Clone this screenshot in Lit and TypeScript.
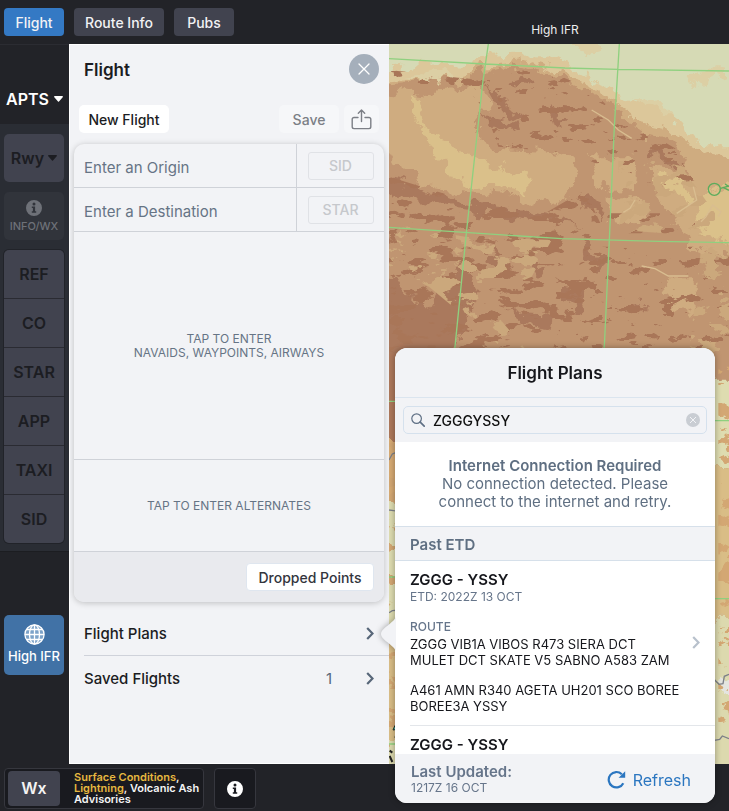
import { LitElement, html, svg, css } from "lit";
import { customElement, state } from "lit/decorators.js";

const reset = css`
  *, *::before, *::after { box-sizing: border-box; }
  button, input { font: inherit; color: inherit; border: 0; background: none; padding: 0; margin: 0; border-radius: 0; }
  button { cursor: pointer; }
  svg { display: block; flex: none; }
  h1, h2, h3, p, ul { margin: 0; padding: 0; font-size: inherit; font-weight: inherit; }
  ul { list-style: none; }
`;

const infoIcon = svg`<svg width="16" height="16" viewBox="0 0 16 16" aria-hidden="true">
  <path fill="currentColor" fill-rule="evenodd" d="M8 0a8 8 0 1 0 0 16A8 8 0 0 0 8 0zM8 2.6a1.5 1.5 0 1 1 0 3 1.5 1.5 0 0 1 0-3zM5.8 6.6h3.3v4.6h1.1v1.5H5.8v-1.5h1.1V8.1H5.8z"/></svg>`;

const caret = svg`<svg width="9" height="6" viewBox="0 0 9 6" aria-hidden="true"><path fill="currentColor" d="M.8 0h7.4c.7 0 1 .7.5 1.200L5 5.400a.7.7 0 0 1-1 0L.3 1.200C-.2.7.1 0 .8 0z"/></svg>`;

const chevron = svg`<svg width="8" height="13" viewBox="0 0 8 13" aria-hidden="true"><path d="M1.200 1l5.300 5.500-5.300 5.500" fill="none" stroke="currentColor" stroke-width="2.200"/></svg>`;

@customElement("terrain-map")
class TerrainMap extends LitElement {
  static styles = css`
    :host { display: block; }
    svg { display: block; width: 100%; height: 100%; }
    .grid { fill: none; stroke: #8fd07f; stroke-width: 4; }
    .border { fill: none; stroke: #7d8088; stroke-width: 4; }
    .fix { fill: none; stroke: #5bac5c; stroke-width: 4; }
  `;

  render() {
    return html`<svg viewBox="12 132 1020 2160" preserveAspectRatio="xMinYMin slice" role="img" aria-label="Terrain map">
      <defs>
        <filter id="rough" color-interpolation-filters="sRGB" filterUnits="userSpaceOnUse" x="-40" y="80" width="1140" height="2260">
          <feTurbulence type="fractalNoise" baseFrequency="0.02" numOctaves="5" seed="7" result="n"/>
          <feDisplacementMap in="SourceGraphic" in2="n" scale="70" xChannelSelector="R" yChannelSelector="G"/>
        </filter>
        <filter id="ridges" filterUnits="userSpaceOnUse" x="-40" y="80" width="1140" height="1400">
          <feTurbulence type="fractalNoise" baseFrequency="0.013 0.03" numOctaves="5" seed="12" result="n"/>
          <feColorMatrix in="n" type="matrix" values="0 0 0 0 0  0 0 0 0 0  0 0 0 0 0  34 0 0 0 -19.500" result="m"/>
          <feComposite in="SourceGraphic" in2="m" operator="in"/>
        </filter>
        <filter id="specks" filterUnits="userSpaceOnUse" x="-40" y="80" width="1140" height="1400">
          <feTurbulence type="fractalNoise" baseFrequency="0.017 0.035" numOctaves="5" seed="5" result="n"/>
          <feColorMatrix in="n" type="matrix" values="0 0 0 0 0  0 0 0 0 0  0 0 0 0 0  34 0 0 0 -21.500" result="m"/>
          <feComposite in="SourceGraphic" in2="m" operator="in"/>
        </filter>
        <filter id="patches" filterUnits="userSpaceOnUse" x="-40" y="80" width="1140" height="2260">
          <feTurbulence type="fractalNoise" baseFrequency="0.015 0.024" numOctaves="5" seed="31" result="n"/>
          <feColorMatrix in="n" type="matrix" values="0 0 0 0 0  0 0 0 0 0  0 0 0 0 0  34 0 0 0 -19" result="m"/>
          <feComposite in="SourceGraphic" in2="m" operator="in"/>
        </filter>
      </defs>
      <rect x="0" y="120" width="1060" height="2200" fill="#c09571"/>
      <g filter="url(#rough)">
        <path fill="#cfac80" d="M-40 80H1100V760L960 735 880 690 940 600 920 540 890 500 900 460 840 420 760 400 700 330 600 265 500 215 400 200 300 215 220 245 120 240-40 250z"/>
        <path fill="#dcc79a" d="M-40 80H1100V480L980 475 900 430 850 385 760 365 690 305 620 260 540 215 430 185 310 200 200 230-40 240z"/>
        <path fill="#d6dab5" d="M-40 80H1100V430L960 430 900 395 860 340 720 300 660 265 590 215 480 165 310 170 250 195 120 190-40 210z"/>
        <path fill="#dccfa4" d="M560 120h80l10 40-60 5zM910 240l60-30 50-20v30l-60 20-30 25zM60 225l90-15 60 25-80 10zM740 290l60 10 60 40-50 0z"/>
        <path fill="#cfac80" d="M-40 265L120 290 160 265 250 260 320 300 285 350 290 410 340 450 470 455 560 480 580 530 540 600 480 615 380 580 280 572 180 565 100 550 50 500-40 460z"/>
        <path fill="#dac08a" d="M110 390L200 420 240 465 340 495 430 535 430 575 340 560 240 555 180 520 140 450zM70 290l40 20 20 90-40-40z"/>
        <path fill="#cfac80" d="M600 475h140l20 35-10 60-70 5-50-40zM680 600l80-10 30 30-50 50-60-10zM840 835l90 0 15 60-30 40-60-20zM790 500l100 20 130 100v160l-100-40-30-80-60-60z"/>
        <path fill="#dbc18a" d="M800 530l90 15 40 50 130-60v190l-110-20-30-100-100-40z"/>
        <path fill="#aa795d" d="M-20 530L80 555 250 610 380 625 500 650 600 680 480 670 330 645 200 625-20 575zM-40 820L60 860 120 930 190 840 230 790 290 880 240 960 200 1080-40 1080zM320 740l60 60-20 30-50-50zM540 860l60 10-20 60-40-30zM390 230l60 20-20 15-60-10zM300 255l50 40 70 60-10 10-70-40zM290 345l110 20 5 25-90-20zM500 325l40 40-20 0-30-20zM360 935l150 10-10 40-90-15zM585 720l80 70-20 20-50-40zM580 580l50 20 30 60-50-40zM800 440l100 60-10 12-100-50zM430 790l60 20-30 15zM750 900l30 5-15 15z"/>
        <path fill="#ad785b" d="M-40 1050H100V1330H-40z"/>
        <path fill="#d7aa73" d="M-40 1330H100V1490H-40z"/>
        <path fill="#dedcb0" d="M-40 1490H100V1870H-40zM960 1130H1100V1390H960z"/>
        <path fill="#d9bd86" d="M-40 1870H100V2220H-40zM960 1390H1100V1850H960z"/>
        <path fill="#dcd9ae" d="M-40 2220H100V2360H-40zM960 1850H1100V2360H960z"/>
        <path fill="#e4e5e0" d="M1000 2040l100 40v30l-80-20z"/>
      </g>
      <g filter="url(#ridges)">
        <path fill="#a97659" d="M12 530L240 600 480 640 600 570 660 700 640 830 500 1000 300 1060H12z"/>
      </g>
      <g filter="url(#specks)">
        <path fill="#a97659" d="M12 210L280 240 460 200 600 260 720 360 880 450 940 540 800 560 560 460 340 440 300 330 250 270 12 260zM640 640l290 0v60l-290 0zM600 740H1032V1060H500z"/>
      </g>
      <g filter="url(#patches)">
        <path fill="#cba87c" d="M12 670L240 710 500 720 440 830 280 900 12 780zM740 460l150 40 100 140v70L700 690zM950 730h82v330h-120zM700 460l200 40v60l-200-40zM12 700l200 100 220 260h-60l-240-200-120-60z"/>
        <path fill="#d3a773" d="M12 1330h40v950h-40zM1000 1100h40v1080h-40z"/>
      </g>
      <g fill="none" stroke="#d9bd90" stroke-width="4">
        <path d="M620 330l50 30 30 30 40 25M770 798l40 8 40 22 60 0M1000 650l8-15-25-20-20 35-15 15M925 560l10 40-60 40M750 600l-15 25-20 12"/>
      </g>
      <g class="grid">
        <path d="M310 132L293 250 245 690 208 1060M703 132L688 380 673 720 657 1060M12 176L300 192 540 204 700 208 1032 213M12 682L250 698 530 716 820 724 1032 728"/>
        <path d="M12 1204H60M12 1731H60M12 2232H60M980 1262H1032M980 1796H1032"/>
      </g>
      <g class="border">
        <path d="M12 1380l10-18 10-4 14-22M12 1530l14 2 24 2M12 1838l10-6 24-2M984 2035l18 18 12-2 4-22 14-6M984 2222l20-4 8-10 20 8"/>
      </g>
      <path d="M30 2176l24-22-8 24 12 2-28 32 6-24-12 2z" fill="#4fc4a5" stroke="#22302e" stroke-width="3"/>
      <path d="M14 2252l8 6M14 2268l8 18" stroke="#222" stroke-width="6"/>
      <g class="fix">
        <circle cx="988" cy="568" r="18"/>
        <path d="M1007 565l25-7M1014 562l18 9M1020 552l12 8"/>
      </g>
    </svg>`;
  }
}

@customElement("side-rail")
class SideRail extends LitElement {
  static styles = [reset, css`
    :host { display: flex; flex-direction: column; background: #222328; font-weight: 600; }
    .top { height: 80px; padding-top: 29px; border-top: 1px solid #2b2c32; display: flex; justify-content: center; }
    .apts { display: flex; align-items: center; gap: 5px; height: 50px; color: #fff; font-size: 16px; }
    .mid { background: #2a2d34; padding: 10px 5px 8px 4px; display: grid; gap: 10px; border-bottom: 1px solid #1c1d21; }
    .key { display: flex; align-items: center; justify-content: center; gap: 4px; height: 48px; background: #41434f; color: #1c1d22; border-radius: 5px; font-size: 16px; }
    .info { flex-direction: column; gap: 3px; background: #31343b; color: #6e7178; font-size: 11px; font-weight: 500; line-height: 14px; }
    .group { border-radius: 5px; overflow: hidden; display: grid; gap: 1px; background: #2a2b32; box-shadow: 0 0 0 1px #212329; }
    .group .key { border-radius: 0; width: 100%; }
    .low { padding: 63px 5px 20px 4px; }
    .mode { width: 100%; height: 60px; border-radius: 5px; background: #4172a6; color: #fff; display: flex; flex-direction: column; align-items: center; justify-content: center; gap: 3px; padding-bottom: 2px; font-size: 13px; font-weight: 500; line-height: 16px; white-space: nowrap; }
  `];

  render() {
    return html`
      <div class="top"><button class="apts">APTS ${caret}</button></div>
      <div class="mid">
        <button class="key">Rwy ${caret}</button>
        <button class="key info">${infoIcon}INFO/WX</button>
        <div class="group">
          ${["REF", "CO", "STAR", "APP", "TAXI", "SID"].map((k) => html`<button class="key">${k}</button>`)}
        </div>
      </div>
      <div class="low">
        <button class="mode">
          <svg width="21" height="21" viewBox="0 0 21 21" fill="none" stroke="#fff" stroke-width="1.300" aria-hidden="true">
            <circle cx="10.500" cy="10.500" r="9.600" fill="#7da3c9"/><ellipse cx="10.500" cy="10.500" rx="5" ry="9.600"/>
            <path d="M10.500 1v19M1 10.500h19M2.500 5.500h16M2.500 15.500h16"/>
          </svg>
          High IFR
        </button>
      </div>`;
  }
}

@customElement("flight-panel")
class FlightPanel extends LitElement {
  static styles = [reset, css`
    :host { display: block; background: #f2f3f6; border: 1px solid #fff; border-width: 1px 0 1px 1px; color: #1b1c22; }
    header { display: flex; align-items: center; justify-content: space-between; padding: 9px 10px 0 14px; }
    h2 { font-size: 17px; font-weight: 600; line-height: 20px; padding-top: 2px; }
    .close { width: 30px; height: 30px; border-radius: 50%; background: #a5afbb; color: #fff; display: grid; place-items: center; }
    .tools { display: flex; gap: 5px; padding: 21px 10px 11px 9px; }
    .btn { height: 28px; border-radius: 5px; background: #fff; font-size: 14px; font-weight: 500; text-align: center; }
    .new { width: 90px; margin-right: auto; }
    .soft { background: #f6f7f9; color: #7c7f86; }
    .save { width: 60px; }
    .share { width: 35px; display: grid; place-items: center; }
    .card { margin: 0 5px 0 4px; border-radius: 10px; box-shadow: 0 1px 6px #00000038; overflow: hidden; background: #f2f3f6; }
    .leg { display: grid; grid-template-columns: 1fr 87px; height: 44px; border-bottom: 1px solid #cfd2d8; }
    .leg input { padding: 3px 0 0 10px; font-size: 15px; min-width: 0; outline: none; border-right: 1px solid #cfd2d8; }
    .leg input::placeholder { color: #667485; opacity: 1; }
    .leg button { align-self: center; justify-self: center; width: 66px; height: 28px; border: 1px solid #e0e2e6; border-radius: 3px; color: #c6c8cc; font-size: 14px; font-weight: 500; }
    .tap { display: block; width: 100%; border-bottom: 1px solid #cfd2d8; color: #667485; font-size: 12px; line-height: 14px; }
    .route { height: 228px; }
    .alternates { height: 92px; }
    .foot { background: #e9eaee; padding: 11px 10px; display: flex; justify-content: flex-end; }
    .dropped { width: 128px; border: 1px solid #dfe6ef; border-radius: 4px; color: #33353d; }
    .links { padding: 9px 0 0 14px; font-size: 15px; font-weight: 500; }
    .links button { display: flex; align-items: center; width: 100%; height: 44px; padding-right: 15px; text-align: left; color: #586779; }
    .links li + li { border-top: 1px solid #cfd2da; }
    .name { flex: 1; color: #1b1c22; }
    .count { margin-right: 34px; font-weight: 400; }
  `];

  render() {
    return html`
      <header>
        <h2>Flight</h2>
        <button class="close" aria-label="Close">
          <svg width="12" height="12" viewBox="0 0 12 12" aria-hidden="true"><path d="M1 1l10 10M11 1L1 11" stroke="currentColor" stroke-width="1.300" stroke-linecap="round"/></svg>
        </button>
      </header>
      <div class="tools">
        <button class="btn new">New Flight</button>
        <button class="btn soft save">Save</button>
        <button class="btn soft share" aria-label="Share">
          <svg width="21" height="21" viewBox="0 0 21 21" fill="none" stroke="currentColor" stroke-width="1.400" stroke-linecap="round" stroke-linejoin="round" aria-hidden="true">
            <path d="M7 8.500H3A1.800 1.800 0 0 0 1.200 10.300v7.500A1.800 1.800 0 0 0 3 19.600h15a1.800 1.800 0 0 0 1.800-1.800v-7.500A1.800 1.800 0 0 0 18 8.500h-4M10.500 12.500V1.200M7.300 4.200l3.200-3.100 3.200 3.100"/>
          </svg>
        </button>
      </div>
      <section class="card">
        <div class="leg"><input aria-label="Origin" placeholder="Enter an Origin" /><button>SID</button></div>
        <div class="leg"><input aria-label="Destination" placeholder="Enter a Destination" /><button>STAR</button></div>
        <button class="tap route">TAP TO ENTER<br />NAVAIDS, WAYPOINTS, AIRWAYS</button>
        <button class="tap alternates">TAP TO ENTER ALTERNATES</button>
        <div class="foot"><button class="btn dropped">Dropped Points</button></div>
      </section>
      <ul class="links">
        <li><button><span class="name">Flight Plans</span>${chevron}</button></li>
        <li><button><span class="name">Saved Flights</span><span class="count">1</span>${chevron}</button></li>
      </ul>`;
  }
}

interface Plan { title: string; etd: string; route: string[]; }

@customElement("plans-popover")
class PlansPopover extends LitElement {
  @state() private query = "ZGGGYSSY";

  private plans: Plan[] = [
    { title: "ZGGG - YSSY", etd: "ETD: 2022Z 13 OCT", route: [
      "ZGGG VIB1A VIBOS R473 SIERA DCT MULET DCT SKATE V5 SABNO A583 ZAM",
      "A461 AMN R340 AGETA UH201 SCO BOREE BOREE3A YSSY",
    ] },
    { title: "ZGGG - YSSY", etd: "", route: [] },
  ];

  static styles = [reset, css`
    :host { display: block; color: #16171c; filter: drop-shadow(0 0 3px #00000059); }
    .arrow { position: absolute; left: -14px; top: 267px; }
    .box { border-radius: 12px; overflow: hidden; background: #fff; }
    h2 { height: 50px; line-height: 50px; text-align: center; font-size: 17px; font-weight: 600; background: #f2f3f6; border-bottom: 1px solid #dbe5ef; }
    .find { padding: 8px; background: #f2f3f6; }
    .field { display: flex; align-items: center; gap: 8px; height: 28px; padding: 0 6px 0 7px; border: 1px solid #d5e1ed; border-radius: 5px; color: #5f7085; }
    .field input { flex: 1; min-width: 0; color: #111; font-size: 14px; font-weight: 500; outline: none; }
    .clear { width: 14px; height: 14px; border-radius: 50%; background: #c9cdd3; color: #f2f3f6; display: grid; place-items: center; }
    .notice { padding: 15px 40px; text-align: center; color: #5f6f82; font-size: 15px; line-height: 18px; }
    .notice h3 { font-weight: 600; white-space: nowrap; }
    .section { height: 35px; padding: 1px 15px 0; background: #f2f3f6; border: 1px solid #d6e0ea; border-width: 1px 0; color: #5f6f82; font-size: 15px; font-weight: 600; line-height: 34px; }
    .list { height: 193px; overflow: hidden; padding-left: 15px; }
    .plan { display: flex; align-items: center; width: 100%; padding: 9px 15px 11px 0; text-align: left; }
    li + li { border-top: 1px solid #e3e6ea; }
    .text { flex: 1; font-size: 13px; line-height: 16px; }
    .title { display: block; font-size: 15px; font-weight: 600; line-height: 19px; }
    .muted { display: block; color: #66758a; font-size: 12px; }
    .label { margin: 14px 0 1px; font-weight: 500; }
    .route { display: block; padding-right: 8px; }
    .route + .route { margin-top: 14px; }
    .go { color: #b8c1cc; }
    footer { display: flex; align-items: center; justify-content: space-between; height: 49px; padding: 2px 24px 0 16px; background: #f2f3f6; color: #66758a; font-size: 12px; line-height: 16px; }
    .upd { display: block; font-size: 15px; font-weight: 600; }
    .refresh { display: flex; align-items: center; gap: 7px; color: #2b76c0; font-size: 16px; }
  `];

  render() {
    return html`
      <svg class="arrow" width="15" height="38" viewBox="0 0 15 38" aria-hidden="true"><path fill="#f2f3f6" d="M15 0v38c0-4-3-6-7-9.500-4-3.200-8-6-8-9.500s4-6.300 8-9.500c4-3.500 7-5.500 7-9.500z"/></svg>
      <div class="box">
        <h2>Flight Plans</h2>
        <div class="find">
          <div class="field">
            <svg width="14" height="14" viewBox="0 0 14 14" fill="none" stroke="currentColor" aria-hidden="true"><circle cx="5.600" cy="5.600" r="4.800" stroke-width="1.200"/><path d="M9.200 9.200l4 4" stroke-width="1.700" stroke-linecap="round"/></svg>
            <input aria-label="Search flight plans" .value=${this.query} @input=${(e: Event) => (this.query = (e.target as HTMLInputElement).value)} />
            <button class="clear" aria-label="Clear" @click=${() => (this.query = "")}>
              <svg width="8" height="8" viewBox="0 0 8 8" aria-hidden="true"><path d="M1 1l6 6M7 1L1 7" stroke="currentColor"/></svg>
            </button>
          </div>
        </div>
        <div class="notice">
          <h3>Internet Connection Required</h3>
          <p>No connection detected. Please connect to the internet and retry.</p>
        </div>
        <h3 class="section">Past ETD</h3>
        <ul class="list">
          ${this.plans.map((p) => html`<li><button class="plan">
            <span class="text">
              <span class="title">${p.title}</span>
              ${p.etd ? html`<span class="muted">${p.etd}</span><span class="muted label">ROUTE</span>` : null}
              ${p.route.map((r) => html`<span class="route">${r}</span>`)}
            </span>
            ${p.etd ? html`<span class="go">${chevron}</span>` : null}
          </button></li>`)}
        </ul>
        <footer>
          <div><span class="upd">Last Updated:</span>1217Z 16 OCT</div>
          <button class="refresh">
            <svg width="19" height="19" viewBox="0 0 19 19" aria-hidden="true"><path d="M14.800 4.200A7.700 7.700 0 1 0 16.300 13.200" fill="none" stroke="currentColor" stroke-width="2.200"/><path fill="currentColor" d="M18.200 1.200v6.600h-6.600z"/></svg>
            Refresh
          </button>
        </footer>
      </div>`;
  }
}

@customElement("app-root")
class AppRoot extends LitElement {
  static styles = [reset, css`
    :host { display: flex; flex-direction: column; min-height: 100vh; position: relative; background: #222328; font-family: Inter, "Liberation Sans", sans-serif; font-size: 14px; }
    .bar { display: grid; grid-template-columns: 389px 1fr; height: 44px; }
    nav { display: flex; gap: 10px; padding: 8px 4px; }
    nav button { height: 28px; border-radius: 4px; background: #41434f; color: #f2f2f4; font-size: 14px; font-weight: 500; width: 60px; }
    nav .wide { width: 90px; }
    nav .on { background: #3479c4; }
    .chart { padding: 21px 8px 0 0; text-align: center; color: #eee; font-size: 12px; line-height: 18px; }
    main { flex: 1; display: grid; grid-template-columns: 69px 320px minmax(0, 1fr); }
    .map { position: relative; overflow: hidden; }
    terrain-map { position: absolute; inset: 0; }
    .status { display: flex; gap: 10px; padding: 4px 4px 2px; height: 47px; }
    .wx { display: flex; align-items: center; gap: 14px; width: 200px; padding: 0 0 0 3px; background: #191a1f; border: 1px solid #36373e; border-radius: 4px; color: #f4f4f4; font-size: 11px; font-weight: 600; line-height: 11px; white-space: nowrap; }
    .wx button { width: 52px; height: 35px; flex: none; border-radius: 4px; background: #41434f; font-size: 16px; font-weight: 600; }
    .hot { color: #e7b840; }
    .about { width: 42px; display: grid; place-items: center; background: #191a1f; border: 1px solid #36373e; border-radius: 4px; color: #fff; }
    plans-popover { position: absolute; right: 14px; bottom: 8px; width: 320px; }
  `];

  render() {
    return html`
      <div class="bar">
        <nav>
          <button class="on">Flight</button><button class="wide">Route Info</button><button>Pubs</button>
        </nav>
        <div class="chart">High IFR</div>
      </div>
      <main>
        <side-rail></side-rail>
        <flight-panel></flight-panel>
        <div class="map"><terrain-map></terrain-map></div>
      </main>
      <div class="status">
        <div class="wx">
          <button>Wx</button>
          <p><span class="hot">Surface Conditions</span>,<br /><span class="hot">Lightning</span>, Volcanic Ash<br />Advisories</p>
        </div>
        <button class="about" aria-label="Information">${infoIcon}</button>
      </div>
      <plans-popover></plans-popover>`;
  }
}
